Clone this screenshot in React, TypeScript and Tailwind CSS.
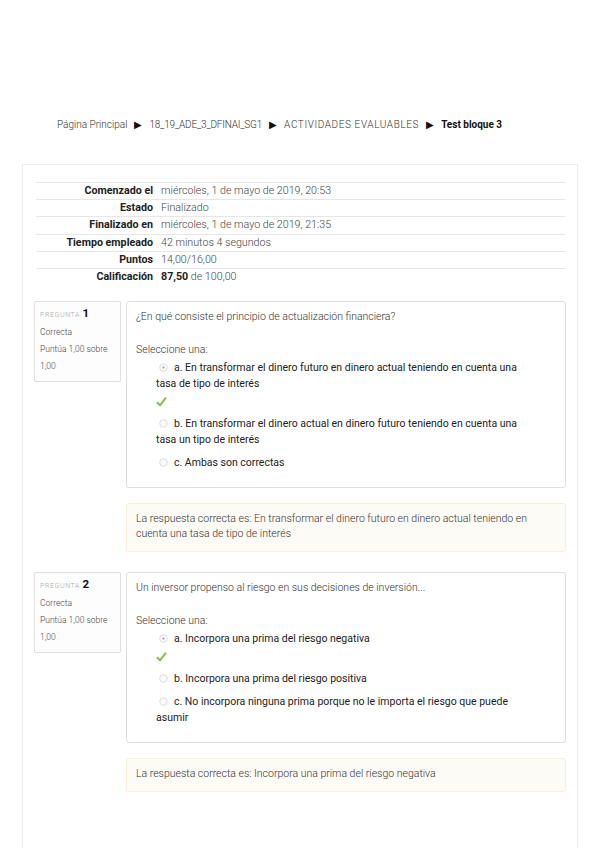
import React from 'react';

interface Option {
  letter: string;
  text: string;
  selected?: boolean;
  correct?: boolean;
}

interface Question {
  num: number;
  text: string;
  options: Option[];
  feedback: string;
}

const summary: { label: string; value: React.ReactNode }[] = [
  { label: 'Comenzado el', value: 'miércoles, 1 de mayo de 2019, 20:53' },
  { label: 'Estado', value: 'Finalizado' },
  { label: 'Finalizado en', value: 'miércoles, 1 de mayo de 2019, 21:35' },
  { label: 'Tiempo empleado', value: '42 minutos 4 segundos' },
  { label: 'Puntos', value: '14,00/16,00' },
  {
    label: 'Calificación',
    value: (
      <>
        <span className="font-bold text-[#222]">87,50</span> de 100,00
      </>
    ),
  },
];

const questions: Question[] = [
  {
    num: 1,
    text: '¿En qué consiste el principio de actualización financiera?',
    options: [
      {
        letter: 'a.',
        text: 'En transformar el dinero futuro en dinero actual teniendo en cuenta una tasa de tipo de interés',
        selected: true,
        correct: true,
      },
      {
        letter: 'b.',
        text: 'En transformar el dinero actual en dinero futuro teniendo en cuenta una tasa un tipo de interés',
      },
      { letter: 'c.', text: 'Ambas son correctas' },
    ],
    feedback:
      'La respuesta correcta es: En transformar el dinero futuro en dinero actual teniendo en cuenta una tasa de tipo de interés',
  },
  {
    num: 2,
    text: 'Un inversor propenso al riesgo en sus decisiones de inversión...',
    options: [
      { letter: 'a.', text: 'Incorpora una prima del riesgo negativa', selected: true, correct: true },
      { letter: 'b.', text: 'Incorpora una prima del riesgo positiva' },
      {
        letter: 'c.',
        text: 'No incorpora ninguna prima porque no le importa el riesgo que puede asumir',
      },
    ],
    feedback: 'La respuesta correcta es: Incorpora una prima del riesgo negativa',
  },
];

function Radio({ selected }: { selected?: boolean }) {
  return (
    <svg width="9" height="9" viewBox="0 0 9 9" className="inline-block align-[-1px] ml-[3px] mr-[6px]">
      <circle cx="4.5" cy="4.5" r="3.8" fill="#fafafa" stroke="#d4d4d4" strokeWidth="0.8" />
      {selected && <circle cx="4.5" cy="4.5" r="1.1" fill="#9a9a9a" />}
    </svg>
  );
}

function Check() {
  return (
    <svg width="11" height="11" viewBox="0 0 11 11">
      <path d="M1 6.2 L4 9.3 L10 1.6" fill="none" stroke="#85c046" strokeWidth="2" strokeLinejoin="round" />
    </svg>
  );
}

function QuestionBlock({ q }: { q: Question }) {
  return (
    <div>
      <div className="flex items-start gap-[5px]">
        {/* Info */}
        <div className="w-[87px] h-[81px] border border-[#e0e0e0] rounded-[2px] bg-[#fdfdfd] px-[5px] pt-[3px] shadow-[0_0_1px_rgba(0,0,0,0.05)]">
          <p className="leading-[14px]">
            <span className="text-[7px] tracking-[0.6px] text-[#a8a8a8] font-light">PREGUNTA </span>
            <span className="text-[11.5px] font-bold text-[#111]">{q.num}</span>
          </p>
          <p className="text-[8.5px] font-light text-[#444] leading-[10px] mt-[5px]">Correcta</p>
          <p className="text-[8.5px] font-light text-[#444] leading-[17px] mt-[4px]">
            Puntúa 1,00 sobre
            <br />
            1,00
          </p>
        </div>

        {/* Content */}
        <div className="flex-1 border border-[#dedede] rounded-[3px] bg-white px-[9px] pt-[7px] pb-[16px]">
          <p className="text-[10.5px] font-light text-[#333] leading-[16px]">{q.text}</p>
          <p className="text-[10.5px] font-light text-[#333] leading-[16px] mt-[17px]">Seleccione una:</p>
          <div className="pl-[20px] pr-[26px] mt-[2px] text-[10.5px] text-[#222] leading-[16px]">
            {q.options.map((o, i) => (
              <div key={o.letter} className={i === 0 ? '' : i === 1 ? 'mt-[6px]' : 'mt-[7px]'}>
                <div>
                  <Radio selected={o.selected} />
                  {`${o.letter} ${o.text}`}
                </div>
                {o.correct && (
                  <div className="h-[16px] mt-[2px] flex items-center">
                    <Check />
                  </div>
                )}
              </div>
            ))}
          </div>
        </div>
      </div>

      {/* Feedback */}
      <div className="ml-[92px] mt-[15px] border border-[#fbefdc] rounded-[3px] bg-[#fdfbf6] px-[9px] pt-[7px] pb-[10px]">
        <p className="text-[10.5px] font-light text-[#333] leading-[15px]">{q.feedback}</p>
      </div>
    </div>
  );
}

export default function App() {
  return (
    <div className="h-[848px] overflow-hidden bg-white font-['Roboto','Liberation_Sans',sans-serif]">
      {/* Breadcrumb */}
      <div className="pt-[119px] pl-[57px] text-[10px] font-light text-[#333] leading-[12px] flex items-center gap-[6px]">
        <span>Página Principal</span>
        <span className="text-[#111] text-[10px] px-[1px]">▶</span>
        <span className="tracking-[-0.2px]">18_19_ADE_3_DFINAI_SG1</span>
        <span className="text-[#111] text-[10px] px-[1px]">▶</span>
        <span className="tracking-[0.6px]">ACTIVIDADES EVALUABLES</span>
        <span className="text-[#111] text-[10px] px-[1px]">▶</span>
        <span className="font-bold text-[#111]">Test bloque 3</span>
      </div>

      {/* Page box */}
      <div className="ml-[22px] w-[556px] mt-[33px] h-[700px] border border-b-0 border-[#ececec] pl-[11px] pr-[11px] pt-[17px]">
        {/* Summary */}
        <table className="ml-[2px] w-[529px] border-collapse">
          <tbody>
            {summary.map((r) => (
              <tr key={r.label} className="border-t border-[#e6e6e6]">
                <th className="w-[117px] h-[17.2px] p-0 text-right text-[10.7px] font-bold text-[#222] leading-[16px]">
                  {r.label}
                </th>
                <td className="h-[17.2px] p-0 pl-[8px] text-[10.7px] font-light text-[#444] leading-[16px]">
                  {r.value}
                </td>
              </tr>
            ))}
          </tbody>
        </table>

        <div className="mt-[15px] flex flex-col gap-[20px]">
          {questions.map((q) => (
            <QuestionBlock key={q.num} q={q} />
          ))}
        </div>
      </div>
    </div>
  );
}
